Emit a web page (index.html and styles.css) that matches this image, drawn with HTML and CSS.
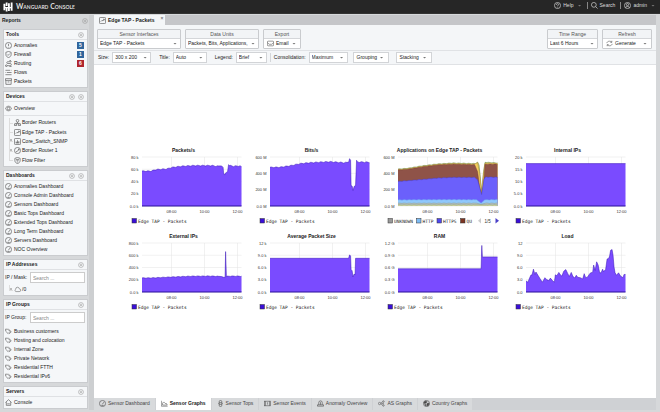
FILE: index.html
```html
<!DOCTYPE html>
<html lang="en">
<head>
<meta charset="utf-8">
<title>Wanguard Console</title>
<link rel="stylesheet" href="styles.css">
</head>
<body>
<svg class="defs" aria-hidden="true">
  <symbol id="i-up" viewBox="0 0 16 16"><circle cx="8" cy="8" r="6.5"/><path d="M5 8l3-3 3 3M5 11l3-3 3 3"/></symbol>
  <symbol id="i-plus" viewBox="0 0 16 16"><circle cx="8" cy="8" r="6.5"/><path d="M8 5v6M5 8h6"/></symbol>
  <symbol id="i-left" viewBox="0 0 16 16"><circle cx="8" cy="8" r="6.5"/><path d="M8 5L5 8l3 3M11 5L8 8l3 3"/></symbol>
  <symbol id="i-alert" viewBox="0 0 16 16"><circle cx="8" cy="8" r="7"/><path d="M8 4v5M8 11v1.500"/></symbol>
  <symbol id="i-shield" viewBox="0 0 16 16"><path d="M8 1l6 2v5c0 4-3 6-6 7-3-1-6-3-6-7V3zM5 8l2 2 4-4"/></symbol>
  <symbol id="i-route" viewBox="0 0 16 16"><circle cx="3" cy="13" r="2"/><path d="M5 13h7a2.500 2.500 0 0 0 0-5H6a2 2 0 0 1 0-4h4M12 1v5M9 3.500l3-2.500 3 2.500M10 15h5"/></symbol>
  <symbol id="i-flows" viewBox="0 0 16 16"><path d="M1 3h11M4 8h11M1 13h14M1 8h1M14 3h1"/></symbol>
  <symbol id="i-box" viewBox="0 0 16 16"><path d="M1 1.500h14v4H1zM2 5.500v9h12v-9M6 9h4"/></symbol>
  <symbol id="i-eye" viewBox="0 0 16 16"><path d="M1 8c3-7 11-7 14 0-3 7-11 7-14 0z"/><circle cx="8" cy="8" r="3"/></symbol>
  <symbol id="i-group" viewBox="0 0 16 16"><circle cx="8" cy="4" r="3"/><path d="M8 7v3M3.500 10h9M1 11h5v4H1zM10 11h5v4h-5z"/></symbol>
  <symbol id="i-tap" viewBox="0 0 16 16"><rect x="1" y="1" width="14" height="14" rx="2"/><path d="M4 10.500l3-3 2 1.500 3-4M9.500 5H12v2.500"/></symbol>
  <symbol id="i-snmp" viewBox="0 0 16 16"><rect x="1" y="1" width="14" height="14" rx="2"/><path d="M5 12V8M8 12V5M11 12V7M4 11h8"/></symbol>
  <symbol id="i-router" viewBox="0 0 16 16"><circle cx="8" cy="8" r="7"/><path d="M4.500 9l2 2 5-6M9 5h2.500v3"/></symbol>
  <symbol id="i-filter" viewBox="0 0 16 16"><path d="M8 1l6 2v5c0 4-3 6-6 7-3-1-6-3-6-7V3zM4.500 5.500h7M5.500 8.500h5M7 11.500h2"/></symbol>
  <symbol id="i-gauge" viewBox="0 0 16 16"><circle cx="8" cy="8" r="7"/><path d="M7.500 10l3.500-5M5.500 12.500h5"/></symbol>
  <symbol id="i-cloud" viewBox="0 0 20 16"><path d="M5 14a4 4 0 0 1 0-7 5 5 0 0 1 10-1 4 4 0 0 1 0 8z"/></symbol>
  <symbol id="i-tags" viewBox="0 0 18 16"><path d="M1 2h6l6 6-5 5.500-7-7zM9 2l7 6.500-5.500 6M3.500 4.500h1"/></symbol>
  <symbol id="i-home" viewBox="0 0 16 16"><path d="M1 8l7-6.500L15 8M3 7v7.500h10V7M5 11h6"/></symbol>
  <symbol id="i-help" viewBox="0 0 16 16"><circle cx="8" cy="8" r="7"/><path d="M5.500 6.500c0-4 5-3 5-.5 0 1.500-2.500 1.500-2.500 3.500M8 11v1.500"/></symbol>
  <symbol id="i-search" viewBox="0 0 16 16"><circle cx="6.500" cy="6.500" r="5.500"/><path d="M10.500 10.500L15 15"/></symbol>
  <symbol id="i-user" viewBox="0 0 16 16"><circle cx="8" cy="8" r="7"/><circle cx="8" cy="6" r="2.500"/><path d="M3.500 13c1-4 8-4 9 0"/></symbol>
  <symbol id="i-mail" viewBox="0 0 18 16"><rect x="1" y="2" width="16" height="12" rx="2"/><path d="M1 6l5 4h6l5-4"/></symbol>
  <symbol id="i-sync" viewBox="0 0 18 16"><path d="M2 7c1-5 9-7 13-2M15 1v4h-4M16 9c-1 5-9 7-13 2M3 15v-4h4"/></symbol>
  <symbol id="i-graph" viewBox="0 0 18 16"><path d="M1 1v14h16M4 12V7l3-3 4 4h3l2 4z"/></symbol>
  <symbol id="i-tops" viewBox="0 0 16 16"><path d="M5 4a3 3 0 0 1 6 0v8a3 3 0 0 1-6 0zM5 6h6M5 10h6M3 8h2M11 8h2"/></symbol>
  <symbol id="i-event" viewBox="0 0 18 16"><rect x="1" y="2" width="16" height="12"/><path d="M9 5v4M9 10.500v1.500M4 2v12M14 2v12"/></symbol>
  <symbol id="i-siren" viewBox="0 0 16 16"><path d="M4 11V6a4 4 0 0 1 8 0v5M1 11h14v3H1zM8 5v6"/></symbol>
  <symbol id="i-as" viewBox="0 0 18 16"><circle cx="4" cy="8" r="3"/><circle cx="14" cy="3" r="2"/><circle cx="14" cy="13" r="2"/><path d="M7 7l5-3M7 9l5 3M9 8h6"/></symbol>
  <symbol id="i-globe" viewBox="0 0 16 16"><circle cx="8" cy="8" r="7"/><path class="solid" d="M3 4l4-2 2 2-2 3-3 1-2-1zM9 8l4-1 1 2-3 5-2-2zM4 10l3 1v3z"/></symbol>
</svg>

<header class="topbar">
  <a class="brand" href="#">
    <svg class="logo" viewBox="0 0 22 22" aria-hidden="true"><path d="M1 4h4v14H1zM6 1h4v8H6zM6 11h4v10H6zM11 3h4v9h-4zM11 14h4v6h-4zM17 1h4v18h-4zM1 11h20v3H1z"/></svg>
    <span>Wanguard Console</span>
  </a>
  <nav class="topnav">
    <a href="#"><svg class="icon"><use href="#i-help"/></svg>Help<i class="caret"></i></a>
    <a href="#"><svg class="icon"><use href="#i-search"/></svg>Search</a>
    <a href="#"><svg class="icon"><use href="#i-user"/></svg>admin<i class="caret"></i></a>
  </nav>
</header>

<div class="shell">
  <aside class="sidebar">
    <div class="side-title"><h1>Reports</h1><svg class="icon tool"><use href="#i-left"/></svg></div>

    <section class="panel">
      <header><h2>Tools</h2><svg class="icon tool"><use href="#i-up"/></svg></header>
      <ul class="list">
        <li><svg class="icon"><use href="#i-alert"/></svg><a href="#">Anomalies</a><b class="badge">5</b></li>
        <li><svg class="icon"><use href="#i-shield"/></svg><a href="#">Firewall</a><b class="badge">1</b></li>
        <li><svg class="icon"><use href="#i-route"/></svg><a href="#">Routing</a><b class="badge red">6</b></li>
        <li><svg class="icon"><use href="#i-flows"/></svg><a href="#">Flows</a></li>
        <li><svg class="icon"><use href="#i-box"/></svg><a href="#">Packets</a></li>
      </ul>
    </section>

    <section class="panel">
      <header><h2>Devices</h2><svg class="icon tool"><use href="#i-up"/></svg><svg class="icon tool"><use href="#i-plus"/></svg></header>
      <div class="overview"><svg class="icon"><use href="#i-eye"/></svg><a href="#">Overview</a></div>
      <ul class="tree">
        <li><svg class="icon"><use href="#i-group"/></svg><a href="#">Border Routers</a></li>
        <li><svg class="icon"><use href="#i-tap"/></svg><a href="#">Edge TAP - Packets</a></li>
        <li class="closed"><svg class="icon"><use href="#i-snmp"/></svg><a href="#">Core_Switch_SNMP</a></li>
        <li class="closed"><svg class="icon"><use href="#i-router"/></svg><a href="#">Border Router 1</a></li>
        <li><svg class="icon"><use href="#i-filter"/></svg><a href="#">Flow Filter</a></li>
      </ul>
    </section>

    <section class="panel">
      <header><h2>Dashboards</h2><svg class="icon tool"><use href="#i-up"/></svg><svg class="icon tool"><use href="#i-plus"/></svg></header>
      <ul class="list">
        <li><svg class="icon"><use href="#i-gauge"/></svg><a href="#">Anomalies Dashboard</a></li>
        <li><svg class="icon"><use href="#i-gauge"/></svg><a href="#">Console Admin Dashboard</a></li>
        <li><svg class="icon"><use href="#i-gauge"/></svg><a href="#">Sensors Dashboard</a></li>
        <li><svg class="icon"><use href="#i-gauge"/></svg><a href="#">Basic Tops Dashboard</a></li>
        <li><svg class="icon"><use href="#i-gauge"/></svg><a href="#">Extended Tops Dashboard</a></li>
        <li><svg class="icon"><use href="#i-gauge"/></svg><a href="#">Long Term Dashboard</a></li>
        <li><svg class="icon"><use href="#i-gauge"/></svg><a href="#">Servers Dashboard</a></li>
        <li><svg class="icon"><use href="#i-gauge"/></svg><a href="#">NOC Overview</a></li>
      </ul>
    </section>

    <section class="panel">
      <header><h2>IP Addresses</h2><svg class="icon tool"><use href="#i-up"/></svg></header>
      <div class="finder"><label for="ip">IP / Mask:</label><input id="ip" type="text" placeholder="Search ..."></div>
      <ul class="tree single">
        <li class="closed"><svg class="icon"><use href="#i-cloud"/></svg><a href="#">/0</a></li>
      </ul>
    </section>

    <section class="panel">
      <header><h2>IP Groups</h2><svg class="icon tool"><use href="#i-up"/></svg></header>
      <div class="finder"><label for="group">IP Group:</label><input id="group" type="text" placeholder="Search ..."></div>
      <ul class="list">
        <li><svg class="icon"><use href="#i-tags"/></svg><a href="#">Business customers</a></li>
        <li><svg class="icon"><use href="#i-tags"/></svg><a href="#">Hosting and colocation</a></li>
        <li><svg class="icon"><use href="#i-tags"/></svg><a href="#">Internal Zone</a></li>
        <li><svg class="icon"><use href="#i-tags"/></svg><a href="#">Private Network</a></li>
        <li><svg class="icon"><use href="#i-tags"/></svg><a href="#">Residential FTTH</a></li>
        <li><svg class="icon"><use href="#i-tags"/></svg><a href="#">Residential IPv6</a></li>
      </ul>
    </section>

    <section class="panel">
      <header><h2>Servers</h2><svg class="icon tool"><use href="#i-up"/></svg></header>
      <ul class="list">
        <li><svg class="icon"><use href="#i-home"/></svg><a href="#">Console</a></li>
      </ul>
    </section>
  </aside>

  <div class="splitter"></div>

  <main class="main">
    <div class="tabs">
      <div class="tab"><svg class="icon"><use href="#i-tap"/></svg><span>Edge TAP - Packets</span><button class="close" aria-label="Close tab">×</button></div>
    </div>

    <div class="groups">
      <div class="group wide">
        <label for="si">Sensor Interfaces</label>
        <span class="pick"><select id="si"><option>Edge TAP - Packets</option></select></span>
      </div>
      <div class="group medium">
        <label for="du">Data Units</label>
        <span class="pick"><select id="du"><option>Packets, Bits, Applications,</option></select></span>
      </div>
      <div class="group small">
        <span class="head">Export</span>
        <button class="action"><svg class="icon"><use href="#i-mail"/></svg>Email<i class="caret"></i></button>
      </div>
      <div class="group range">
        <label for="tr">Time Range</label>
        <span class="pick"><select id="tr"><option>Last 6 Hours</option></select></span>
      </div>
      <div class="group range last">
        <span class="head">Refresh</span>
        <button class="action"><svg class="icon"><use href="#i-sync"/></svg>Generate<i class="caret"></i></button>
      </div>
    </div>

    <div class="options">
      <label for="size">Size:</label>
      <span class="pick boxed w-l"><select id="size"><option>300 x 200</option></select></span>
      <label for="title">Title:</label>
      <span class="pick boxed w-m"><select id="title"><option>Auto</option></select></span>
      <label for="legend">Legend:</label>
      <span class="pick boxed w-s"><select id="legend"><option>Brief</option></select></span>
      <i class="rule"></i>
      <label for="cons">Consolidation:</label>
      <span class="pick boxed w-l"><select id="cons"><option>Maximum</option></select></span>
      <button class="drop">Grouping<i class="caret"></i></button>
      <button class="drop">Stacking<i class="caret"></i></button>
    </div>

    <div class="canvas"><div class="charts" id="charts"></div></div>

    <nav class="views">
      <a href="#"><svg class="icon"><use href="#i-gauge"/></svg>Sensor Dashboard</a>
      <a href="#" class="active"><svg class="icon"><use href="#i-graph"/></svg>Sensor Graphs</a>
      <a href="#"><svg class="icon"><use href="#i-tops"/></svg>Sensor Tops</a>
      <a href="#"><svg class="icon"><use href="#i-event"/></svg>Sensor Events</a>
      <a href="#"><svg class="icon"><use href="#i-siren"/></svg>Anomaly Overview</a>
      <a href="#"><svg class="icon"><use href="#i-as"/></svg>AS Graphs</a>
      <a href="#"><svg class="icon"><use href="#i-globe"/></svg>Country Graphs</a>
    </nav>
  </main>
</div>
<script src="charts.js"></script>
</body>
</html>
```
FILE: styles.css
```css
* { box-sizing: border-box; }

html, body { height: 100%; }

body {
  margin: 0;
  display: flex;
  flex-direction: column;
  background: #d6d8da;
  color: #222;
  font: 5px/9px "Liberation Sans", Arial, sans-serif;
  overflow: hidden;
}

h1, h2, ul { margin: 0; padding: 0; list-style: none; }
h1, h2 { font-size: 5px; line-height: 9px; font-weight: bold; }
a { color: inherit; text-decoration: none; }
button, input, select { font: inherit; color: inherit; margin: 0; }

.defs { position: absolute; width: 0; height: 0; }

.icon {
  width: 7px;
  height: 7px;
  flex: none;
  fill: none;
  stroke: #555;
  stroke-width: 1.5;
}
.icon.tool { width: 6px; height: 6px; stroke: #999; }
.solid { fill: #444; }

.caret {
  width: 4px;
  height: 2px;
  background: #777;
  clip-path: polygon(0 0, 100% 0, 50% 100%);
}

/* top bar */
.topbar {
  flex: none;
  height: 14px;
  display: flex;
  justify-content: space-between;
  background: #262626;
  color: #ddd;
  border-bottom: 1px solid #333;
}
.brand {
  display: flex;
  align-items: center;
  gap: 3px;
  padding-left: 3px;
  font: bold 7px/13px Lato, sans-serif;
  font-variant: small-caps;
}
.logo { width: 10px; height: 10px; fill: #fff; }
.topnav { display: flex; align-items: center; padding: 0 4px 2px 0; }
.topnav a { display: flex; align-items: center; gap: 2px; padding: 0 5px 0 3px; line-height: 7px; }
.topnav a:last-child { padding-right: 1px; }
.topnav a + a { border-left: 1px solid #888; }
.topnav .icon { stroke: #ddd; }
.topnav .caret { margin-left: 2px; }

/* layout */
.shell { flex: 1; min-height: 0; display: flex; padding: 1px 4px 2px 0; }
.sidebar {
  flex: none;
  width: 89px;
  padding: 0 0 0 3px;
  display: flex;
  flex-direction: column;
  gap: 3px;
}
.side-title {
  display: flex;
  justify-content: space-between;
  align-items: center;
  height: 11px;
  margin-left: -1px;
}
.splitter { flex: none; width: 5px; background: #cdcfd1; }

/* panels */
.panel { background: #f5f7f9; border: 1px solid #cacccf; margin-right: 1px; }
.panel > header {
  display: flex;
  align-items: center;
  gap: 3px;
  height: 10px;
  padding: 0 3px 0 2px;
  border-bottom: 1px solid #dfe1e4;
}
.panel h2 { flex: 1; }
.side-title .tool { margin-right: 1px; }
.list { padding: 1px 3px 1px 1px; }
.list li { display: flex; align-items: center; gap: 2px; height: 9px; }
.badge {
  margin-left: auto;
  width: 7px;
  height: 7px;
  background: #30659c;
  color: #fff;
  line-height: 7px;
  text-align: center;
}
.badge.red { background: #b0262e; }
.overview {
  display: flex;
  align-items: center;
  gap: 2px;
  height: 14px;
  padding: 0 1px 1px;
  border-bottom: 1px solid #dfe1e4;
}
.tree {
  display: grid;
  grid-auto-rows: 1fr;
  height: 50px;
  padding: 2px 0 1px 5px;
}
.tree.single { height: 12px; }
.tree li { display: flex; align-items: center; gap: 1px; position: relative; padding-left: 5px; }
.tree li::before {
  content: "";
  position: absolute;
  left: 0;
  top: 0;
  width: 3px;
  height: 50%;
  border-left: 1px solid #ddd;
  border-bottom: 1px solid #ddd;
}
.tree li:not(:last-child)::after {
  content: "";
  position: absolute;
  left: 0;
  top: 50%;
  height: 50%;
  border-left: 1px solid #ddd;
}
.tree .closed::before {
  background: linear-gradient(#bbb, #bbb) 0 100% / 2px 2px no-repeat;
}
.finder { display: flex; align-items: center; gap: 1px; height: 13px; padding: 2px 2px 0 1px; }
.finder label { flex: none; width: 24px; white-space: nowrap; }
.finder input {
  flex: 1;
  min-width: 0;
  height: 11px;
  padding: 0 2px;
  border: 1px solid #ccc;
  background: #fff;
}
.finder input::placeholder { color: #888; }
.finder + .list { padding-top: 4px; }

/* main column */
.main { flex: 1; min-width: 0; display: flex; flex-direction: column; background: #fff; }
.tabs { flex: none; display: flex; height: 10px; background: #c5c6c9; }
.tab {
  display: flex;
  align-items: center;
  gap: 2px;
  padding: 0 2px 0 5px;
  background: #f4f6f8;
  font-weight: bold;
}
.close {
  align-self: flex-start;
  margin-left: 4px;
  padding: 0;
  border: 0;
  background: none;
  color: #777;
  line-height: 7px;
}
.groups {
  flex: none;
  display: flex;
  gap: 4px;
  padding: 4px 4px 1px 3px;
  background: #f4f6f8;
  border-bottom: 1px solid #e0e2e5;
}
.group {
  display: flex;
  flex-direction: column;
  border: 1px solid #c9cbce;
  border-radius: 1px;
  background: #fff;
}
.group label, .group .head {
  height: 9px;
  background: #f2f4f6;
  border-bottom: 1px solid #d4d6d9;
  color: #555;
  text-align: center;
}
.wide { width: 84px; }
.medium { width: 74px; }
.small { width: 38px; }
.range { width: 51px; margin-left: auto; }
.range.last { width: 50px; margin-left: 0; }

.pick { position: relative; display: flex; }
.pick::after {
  content: "";
  position: absolute;
  right: 3px;
  top: 50%;
  width: 4px;
  height: 2px;
  margin-top: -1px;
  background: #777;
  clip-path: polygon(0 0, 100% 0, 50% 100%);
  pointer-events: none;
}
.pick select {
  appearance: none;
  width: 100%;
  height: 9px;
  padding: 0 8px 0 2px;
  border: 0;
  background: none;
}
.boxed { border: 1px solid #d2d4d7; background: #fff; margin-right: 5px; }
.w-l { width: 39px; }
.w-m { width: 34px; }
.w-s { width: 31px; }

.action, .drop {
  display: flex;
  align-items: center;
  gap: 2px;
  height: 9px;
  padding: 0 4px 0 3px;
  border: 0;
  background: none;
}
.action .caret, .drop .caret { margin-left: auto; }
.options {
  flex: none;
  display: flex;
  align-items: center;
  gap: 3px;
  height: 14px;
  padding: 0 4px;
  background: #f4f6f8;
  border-bottom: 1px solid #e0e2e5;
}
.options .w-s { margin-right: 0; }
.rule { height: 9px; border-left: 1px solid #d4d6d9; }
.drop { width: 36px; height: 11px; border: 1px solid #d2d4d7; background: #fff; margin-right: 4px; }
.boxed + .drop { margin-left: -3px; }

/* charts */
.canvas {
  flex: 1;
  min-height: 0;
  display: grid;
  align-content: center;
  justify-content: center;
  padding-bottom: 2px;
}
.charts { display: grid; grid-template-columns: repeat(4, 128px); }
.chart { display: block; width: 100%; }
.chart text { font-family: "Liberation Sans", Arial, sans-serif; font-size: 8px; fill: #333; }
.chart .title { font-size: 10px; font-weight: bold; fill: #222; text-anchor: middle; }
.chart .y { text-anchor: end; }
.chart .x { text-anchor: middle; }
.chart .key { font-family: "DejaVu Sans Mono", monospace; font-size: 9px; fill: #222; }
.chart .pager { font-size: 9px; }
.chart .grid { stroke: #e2e2e2; stroke-width: 1; }
.chart .axis { stroke: #2b109c; stroke-width: 2; }

/* bottom view switcher */
.views { flex: none; display: flex; gap: 1px; height: 12px; background: #cfd1d4; color: #444; }
.views a { display: flex; align-items: center; gap: 2px; padding: 0 5px 1px; background: #d8dadc; }
.views .active { background: #fff; color: #222; font-weight: bold; }
```
FILE: charts.js
```js
const L = 46, R = 245, T = 24, B = 122;
const PURPLE = "#7a4bff", INK = "#3411b5";

// Each point is [percent of the time window, value].
const charts = [
  { title: "Packets/s", max: 80, ticks: ["80 k", "60 k", "40 k", "20 k", "0.0 k"], noise: 0.8,
    data: [[0,57],[9,57],[14,59.500],[25,60.500],[30,63],[40,65],[52,66],[70,66],[75,65],[80,65.500],[81.500,63],[82,54],[83,50.500],[84,54],[86,56],[87,67.500],[88,66],[92,65],[98,65.500],[100,64]] },
  { title: "Bits/s", max: 600, ticks: ["600 M", "400 M", "200 M", "0.0 M"], noise: 6,
    data: [[0,473],[10,475],[20,492],[30,518],[40,530],[50,537],[60,542],[75,530],[79,535],[80,580],[81,560],[81.500,250],[82.500,245],[83.500,190],[84.500,240],[86,250],[87,560],[88,540],[100,535]] },
  { title: "Applications on Edge TAP - Packets", max: 600, ticks: ["600 M", "400 M", "200 M", "0.0 M"], noise: 3, apps: true,
    bands: [
      ["#c4d08a", "#5f7a34", [[0,452],[10,462],[25,493],[40,515],[55,526],[75,520],[78,518],[80,538],[81.500,500],[84,180],[86,420],[87.500,535],[100,528]]],
      ["#f5d060", "#b08a2c", [[0,444],[10,455],[25,485],[40,508],[55,518],[77,512],[80,530],[82,400],[84,160],[86,400],[87.500,525],[100,520]]],
      ["#8f5348", "#7a4238", [[0,440],[10,450],[25,480],[40,503],[55,512],[77,505],[80,420],[82,230],[84,145],[86,260],[87.500,512],[100,512]]],
      ["#6b60fb", "#4a40d0", [[0,300],[15,315],[40,342],[55,350],[77,350],[80,320],[84,140],[86.500,330],[88,355],[100,352]]],
      ["#90c8fb", "#6aa8ec", [[0,74],[50,78],[79,76],[83.500,35],[87,74],[100,78]]],
      ["#b6bfc0", "#8b9a8b", [[0,34],[79,34],[83.500,20],[88,34],[100,34]]],
      ["#ccd3a4", "#8fa06a", [[0,14],[100,14]]]
    ] },
  { title: "Internal IPs", max: 20, ticks: ["20 k", "15 k", "10 k", "5.0 k", "0.0 k"], data: [[0,17.300],[100,17.300]] },
  { title: "External IPs", max: 800, ticks: ["800 k", "600 k", "400 k", "200 k", "0.0 k"], noise: 5,
    data: [[0,229],[10,230],[25,242],[50,258],[70,260],[80,252],[82,240],[83.500,240],[84,660],[84.800,250],[85.500,260],[100,258]] },
  { title: "Average Packet Size", max: 12, ticks: ["12 k", "9.0 k", "6.0 k", "3.0 k", "0.0 k"],
    data: [[0,8.250],[79,8.250],[80,9.100],[81,8.800],[81.500,5.500],[82.500,5.200],[83.500,3.700],[84.500,4.400],[85.500,4.200],[86,8.250],[100,8.250]] },
  { title: "RAM", max: 1.2, ticks: ["1.2 G", "0.9 G", "0.6 G", "0.3 G", "0.0 G"],
    data: [[0,0.570],[83.500,0.570],[84.200,1.140],[84.800,0.860],[100,0.860]] },
  { title: "Load", max: 12, ticks: ["12", "9.0", "6.0", "3.0", "0.0"],
    data: [[0,2.7],[2,2.4],[3,3.1],[5,4.2],[6,4.1],[7.500,5.6],[9,4.3],[10,4.9],[12,4.1],[14,3.3],[16.500,2.4],[19,3.5],[21,3],[23,2.8],[24.500,3.4],[26.500,2.8],[28.500,2.4],[29.500,4.2],[31,4],[33,4.8],[34.500,4.2],[36,3.9],[38,5.1],[40,5.5],[42,4.5],[43.500,3.8],[45.500,4.8],[47,3.9],[49,3.4],[50.500,4.1],[52,3.6],[54.500,3.5],[57,3.2],[58.500,4.5],[60,3.5],[62,3.7],[63.500,4.3],[65,4.7],[67,4.8],[68,6.6],[69.500,5.3],[71,7.4],[72.500,6.6],[74,4.7],[75.500,4.7],[77,5.6],[78,5],[80,5.5],[81.500,8.1],[83,8.2],[84,8.8],[85,10.200],[86.500,10.400],[87.500,9],[88.500,6.1],[89.500,4.7],[91,4.1],[93,4.7],[95,3.9],[97.500,3.5],[98.500,4.3],[100,4.3]] }
];

function at(points, t) {
  const i = points.findIndex(p => p[0] >= t);
  if (i <= 0) return points[0][1];
  const [a, b] = [points[i - 1], points[i]];
  return a[1] + (b[1] - a[1]) * (t - a[0]) / (b[0] - a[0]);
}

function area(points, max, noise, fill, stroke) {
  const times = new Set(points.map(p => p[0]));
  if (noise) for (let t = 0; t < 100; t += 1) if (t < 78 || t > 88) times.add(t);
  const line = [...times].sort((a, b) => a - b).map((t, i) => {
    const wobble = noise && (t < 78 || t > 88) ? noise * [0, 0.3, -1, 0.8, -0.4][(i * 3) % 5] : 0;
    return (L + (R - L) * t / 100).toFixed(1) + " " + (B - (B - T) * (at(points, t) + wobble) / max).toFixed(1);
  }).join("L");
  return `<path fill="${fill}" d="M${L} ${B}L${line}L${R} ${B}z"/><path fill="none" stroke="${stroke}" stroke-width="1" d="M${line}"/>`;
}

const key = (x, tx, color, label) =>
  `<rect x="${x}" y="147" width="9" height="9" fill="${color}" stroke="#333"/><text class="key" x="${tx}" y="155">${label}</text>`;

function draw(c) {
  const step = (B - T) / (c.ticks.length - 1);
  let s = `<svg class="chart" viewBox="0 0 256 172" role="img" aria-label="${c.title}"><text class="title" x="129" y="13">${c.title}</text>`;
  c.ticks.forEach((label, i) => {
    const y = T + step * i;
    s += `<path class="grid" d="M${L} ${y}H${R}"/><text class="y" x="39" y="${y + 3}">${label}</text>`;
  });
  [["08:00", 105], ["10:00", 171], ["12:00", 237]].forEach(([label, x]) => {
    s += `<path class="grid" d="M${x} ${T}V${B}"/><text class="x" x="${x}" y="136">${label}</text>`;
  });
  if (c.apps) {
    c.bands.forEach(([fill, stroke, points]) => { s += area(points, c.max, c.noise, fill, stroke); });
    s += key(26, 38, "#999", "UNKNOWN") + key(83, 95, "#7dbcf5", "HTTP") + key(124, 136, "#5048f0", "HTTPS") + key(171, 183, "#7c3422", "QU");
    s += `<path fill="#ccc" d="M212 146v11l-6-5.500z"/><text class="pager" x="219" y="155">1/5</text><path fill="#4a40c8" d="M241 146v11l7-5.500z"/>`;
  } else {
    s += area(c.data, c.max, c.noise, PURPLE, INK) + `<path class="axis" d="M${L} ${B}H${R}"/>` + key(26, 38, "#3a0fd8", "Edge TAP - Packets");
  }
  return s + "</svg>";
}

document.getElementById("charts").innerHTML = charts.map(draw).join("");
```
